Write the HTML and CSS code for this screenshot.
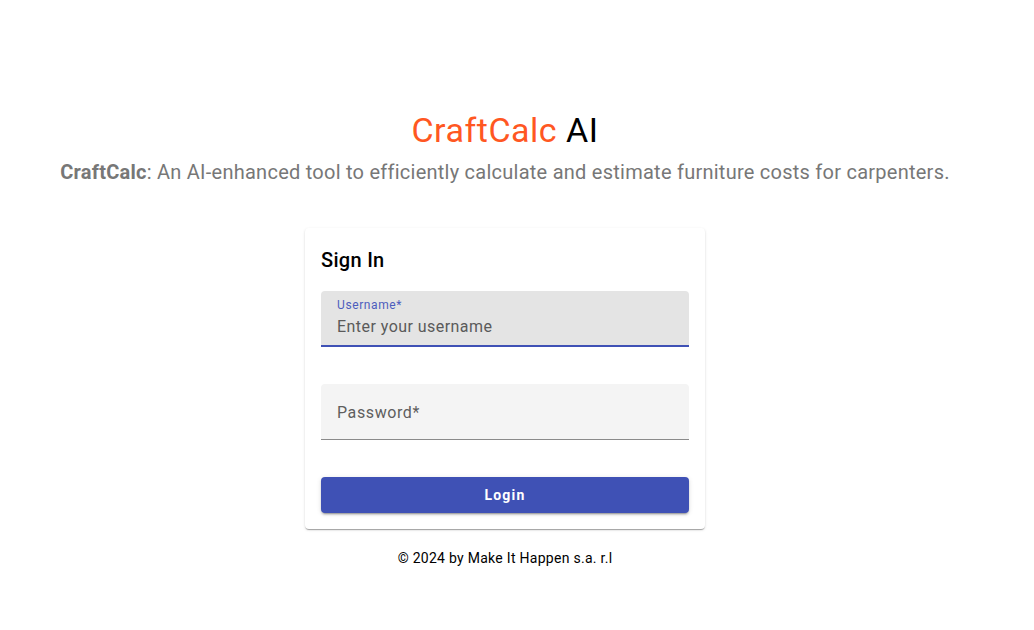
FILE: index.html
```html
<!DOCTYPE html>
<html>
<head>
<meta charset="utf-8">
<link rel="stylesheet" href="styles.css">
</head>
<body>
<main class="page">
  <header class="hero">
    <h1 class="title"><span class="brand">CraftCalc</span> AI</h1>
    <p class="subtitle"><strong>CraftCalc</strong>: An AI-enhanced tool to efficiently calculate and estimate furniture costs for carpenters.</p>
  </header>
  <section class="card">
    <h2 class="card-title">Sign In</h2>
    <div class="field field-focused">
      <span class="field-label-small">Username*</span>
      <span class="field-placeholder">Enter your username</span>
    </div>
    <div class="field field-idle">
      <span class="field-label">Password*</span>
    </div>
    <button class="btn">Login</button>
  </section>
  <footer class="footer">© 2024 by Make It Happen s.a. r.l</footer>
</main>
</body>
</html>
```

FILE: styles.css
```css
* { box-sizing: border-box; }
html, body { margin: 0; padding: 0; background: #fff; }
body { font-family: Roboto, "Noto Sans", sans-serif; color: #000; }
.page {
  width: 1010px;
  display: flex;
  flex-direction: column;
  align-items: center;
  padding-top: 109px;
}
.hero { text-align: center; }
.title {
  margin: 0;
  font-size: 34px;
  font-weight: 400;
  line-height: 42px;
  letter-spacing: 0.5px;
  color: #000;
}
.brand { color: #ff5722; }
.subtitle {
  margin: 5px 0 0;
  font-size: 20px;
  line-height: 32px;
  letter-spacing: 0.25px;
  color: #777;
}
.subtitle strong { font-weight: 700; color: #777; }
.card {
  margin-top: 40px;
  width: 400px;
  padding: 16px;
  background: #fff;
  border-radius: 4px;
  box-shadow: 0 2px 1px -1px rgba(0,0,0,0.2), 0 1px 1px 0 rgba(0,0,0,0.14), 0 1px 3px 0 rgba(0,0,0,0.12);
  display: flex;
  flex-direction: column;
}
.card-title {
  margin: 0;
  font-size: 20px;
  font-weight: 500;
  line-height: 32px;
  letter-spacing: 0.3px;
}
.field {
  position: relative;
  height: 56px;
  border-radius: 4px 4px 0 0;
  padding: 0 16px;
}
.field-focused {
  margin-top: 15px;
  background: #e4e4e4;
  border-bottom: 2px solid #3f51b5;
  display: flex;
  flex-direction: column;
  padding-top: 6px;
}
.field-label-small {
  font-size: 12px;
  line-height: 16px;
  color: #4d5dbd;
  letter-spacing: 0.6px;
}
.field-placeholder {
  margin-top: 2px;
  font-size: 16px;
  line-height: 24px;
  color: #5a5a5a;
  letter-spacing: 0.45px;
}
.field-idle {
  margin-top: 37px;
  background: #f4f4f4;
  border-bottom: 1px solid #8a8a8a;
  display: flex;
  align-items: center;
}
.field-label {
  font-size: 16px;
  color: #5e5e5e;
  letter-spacing: 0.6px;
  margin-top: 1px;
}
.btn {
  margin-top: 37px;
  height: 36px;
  border: 0;
  border-radius: 4px;
  background: #3f51b5;
  color: #fff;
  font-family: Roboto, sans-serif;
  font-size: 14px;
  font-weight: 700;
  letter-spacing: 1.2px;
  box-shadow: 0 3px 1px -2px rgba(0,0,0,0.2), 0 2px 2px 0 rgba(0,0,0,0.14), 0 1px 5px 0 rgba(0,0,0,0.12);
}
.footer {
  margin-top: 19px;
  font-size: 14px;
  line-height: 20px;
  letter-spacing: 0.28px;
  color: #000;
}
```
